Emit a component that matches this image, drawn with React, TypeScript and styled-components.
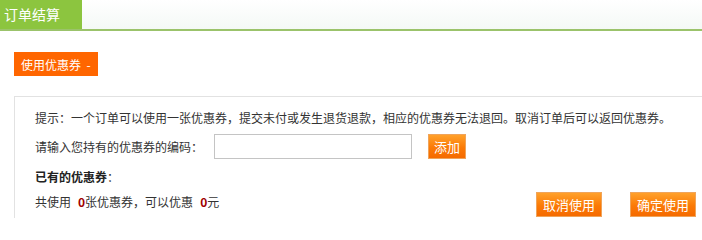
import styled, { createGlobalStyle } from 'styled-components'

const GlobalStyle = createGlobalStyle`
  html, body {
    margin: 0;
    padding: 0;
    background: #fff;
    overflow: hidden;
  }

  body {
    color: #333;
    font-family: SimSun, "Noto Sans CJK SC", "Liberation Sans", sans-serif;
    font-size: 12px;
  }
`

const Page = styled.div`
  width: 702px;
  height: 218px;
  overflow: hidden;
`

const Header = styled.div`
  display: flex;
  height: 29px;
  border-bottom: 2px solid #9bc36b;
  background: linear-gradient(#ffffff, #f4f9f6);
`

const HeaderTab = styled.div`
  width: 82px;
  padding-left: 4px;
  box-sizing: border-box;
  background: #8cc53f;
  color: #fff;
  font-size: 14px;
  line-height: 29px;
`

const CouponToggle = styled.button`
  display: block;
  margin: 21px 0 0 14px;
  height: 24px;
  width: 84px;
  padding: 0 0 0 7px;
  border: none;
  background: #ff6600;
  color: #fff;
  font-family: inherit;
  font-size: 12px;
  text-align: left;
  cursor: pointer;
`

const CouponBox = styled.div`
  margin: 20px -10px 0 14px;
  padding: 9px 0 20px 20px;
  border: 1px solid #e2e2e2;
`

const Notice = styled.p`
  margin: 0;
  line-height: 24px;
`

const CodeRow = styled.div`
  display: flex;
  align-items: center;
  margin-top: 4px;
  height: 25px;
`

const CodeLabel = styled.span`
  width: 179px;
`

const CodeInput = styled.input`
  box-sizing: border-box;
  width: 198px;
  height: 25px;
  margin: 0;
  border: 1px solid #c4c4c4;
  outline: none;
`

const OrangeButton = styled.button<{ $width: number }>`
  box-sizing: border-box;
  width: ${p => p.$width}px;
  height: 25px;
  padding: 0;
  border: 1px solid #f0a45a;
  background: linear-gradient(#ffa12b, #fb7a06 55%, #f56a00);
  color: #fff;
  font-family: inherit;
  font-size: 13px;
  cursor: pointer;
`

const AddButton = styled(OrangeButton)`
  margin-left: 16px;
`

const OwnedTitle = styled.div`
  margin-top: 6px;
  line-height: 24px;

  strong {
    color: #222;
  }
`

const SummaryRow = styled.div`
  display: flex;
  justify-content: space-between;
  align-items: flex-start;
  margin-top: 3px;
  padding-right: 15px;
`

const SummaryText = styled.span`
  line-height: 20px;
`

const Amount = styled.b`
  margin-left: 7px;
  color: #a00000;
`

const Actions = styled.div`
  display: flex;
  gap: 28px;
`

export default function App() {
  return (
    <Page>
      <GlobalStyle />
      <Header>
        <HeaderTab>订单结算</HeaderTab>
      </Header>

      <CouponToggle>使用优惠券&nbsp;&nbsp;-</CouponToggle>

      <CouponBox>
        <Notice>
          提示：一个订单可以使用一张优惠券，提交未付或发生退货退款，相应的优惠券无法退回。取消订单后可以返回优惠券。
        </Notice>

        <CodeRow>
          <CodeLabel>请输入您持有的优惠券的编码：</CodeLabel>
          <CodeInput type="text" />
          <AddButton $width={38}>添加</AddButton>
        </CodeRow>

        <OwnedTitle>
          <strong>已有的优惠券</strong>：
        </OwnedTitle>

        <SummaryRow>
          <SummaryText>
            共使用<Amount>0</Amount>张优惠券，可以优惠<Amount>0</Amount>元
          </SummaryText>
          <Actions>
            <OrangeButton $width={66}>取消使用</OrangeButton>
            <OrangeButton $width={66}>确定使用</OrangeButton>
          </Actions>
        </SummaryRow>
      </CouponBox>
    </Page>
  )
}
